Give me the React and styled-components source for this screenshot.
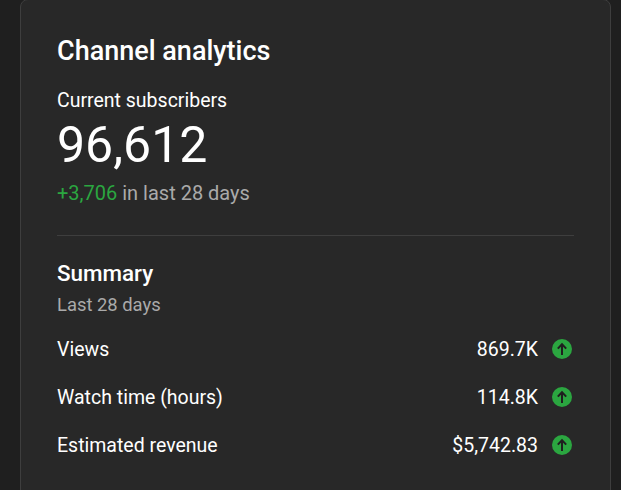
import React from "react";
import styled, { createGlobalStyle } from "styled-components";

const GlobalStyle = createGlobalStyle`
  html, body {
    margin: 0;
    height: 100%;
    background: #1f1f1f;
    overflow: hidden;
  }
  body {
    font-family: Roboto, "Liberation Sans", sans-serif;
    color: #fff;
  }
`;

const Page = styled.div`
  width: 621px;
  height: 490px;
  padding: 0 10px 0 20px;
  box-sizing: border-box;
  overflow: hidden;
`;

const Card = styled.section`
  height: 500px;
  box-sizing: border-box;
  margin-top: -1px;
  padding: 37px 36px 0;
  background: #282828;
  border: 1px solid #3e3e3e;
  border-radius: 8px;
`;

const Title = styled.h1`
  margin: 0;
  font-size: 27px;
  line-height: 28px;
  font-weight: 500;
`;

const Label = styled.div`
  margin-top: 24px;
  font-size: 19.5px;
  line-height: 24px;
`;

const BigCount = styled.div`
  font-size: 50px;
  line-height: 64px;
  font-weight: 400;
`;

const Delta = styled.div`
  margin-top: 4px;
  font-size: 20px;
  line-height: 24px;
  color: #aaa;
`;

const Gain = styled.span`
  color: #2ba640;
`;

const Divider = styled.hr`
  margin: 30px 0 0;
  border: 0;
  height: 1px;
  background: #3e3e3e;
`;

const SummaryTitle = styled.h2`
  margin: 23px 0 0;
  font-size: 22.4px;
  line-height: 28px;
  font-weight: 500;
`;

const Caption = styled.div`
  margin-top: 7px;
  font-size: 18.4px;
  line-height: 22px;
  color: #aaa;
`;

const Metrics = styled.div`
  margin-top: 9px;
  display: flex;
  flex-direction: column;
`;

const Row = styled.div`
  height: 48px;
  display: flex;
  align-items: center;
  justify-content: space-between;
  font-size: 19.5px;
`;

const Value = styled.div`
  display: flex;
  align-items: center;
  gap: 14px;
`;

const UpBadge = styled.svg`
  width: 20px;
  height: 20px;
  margin-right: 2px;
  display: block;
`;

function UpIcon() {
  return (
    <UpBadge viewBox="0 0 20 20">
      <circle cx="10" cy="10" r="10" fill="#2ba640" />
      <path
        d="M10 16V5.5M5.8 9.6L10 5.2L14.2 9.6"
        fill="none"
        stroke="#1f1f1f"
        strokeWidth="2"
      />
    </UpBadge>
  );
}

const metrics = [
  { label: "Views", value: "869.7K" },
  { label: "Watch time (hours)", value: "114.8K" },
  { label: "Estimated revenue", value: "$5,742.83" },
];

export default function App() {
  return (
    <Page>
      <GlobalStyle />
      <Card>
        <Title>Channel analytics</Title>
        <Label>Current subscribers</Label>
        <BigCount>96,612</BigCount>
        <Delta>
          <Gain>+3,706</Gain> in last 28 days
        </Delta>
        <Divider />
        <SummaryTitle>Summary</SummaryTitle>
        <Caption>Last 28 days</Caption>
        <Metrics>
          {metrics.map((m) => (
            <Row key={m.label}>
              <span>{m.label}</span>
              <Value>
                {m.value}
                <UpIcon />
              </Value>
            </Row>
          ))}
        </Metrics>
      </Card>
    </Page>
  );
}
